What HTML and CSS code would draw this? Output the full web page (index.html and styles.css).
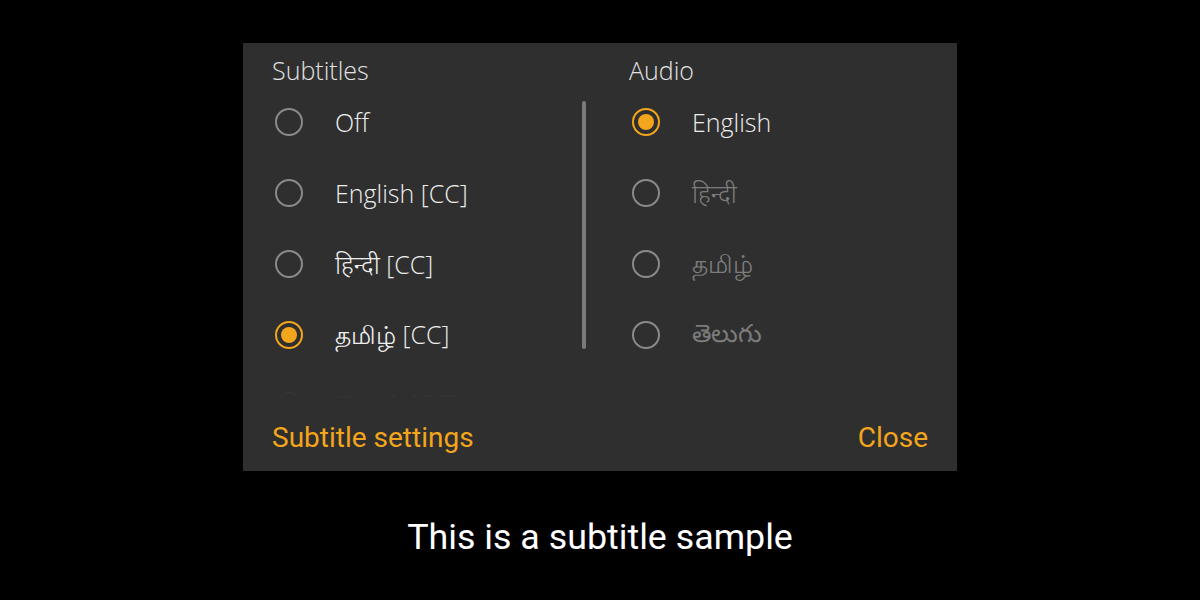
FILE: index.html
```html
<!DOCTYPE html>
<html lang="en">

<head>
    <meta charset="UTF-8">
    <meta name="viewport" content="width=device-width, initial-scale=1.0">
    <title>Subtitles and audio</title>
    <link rel="stylesheet" href="styles.css">
</head>

<body>
    <div class="screen">
        <div class="panel">
            <div class="columns">
                <div class="col col-left">
                    <h2>Subtitles</h2>
                    <div class="list-wrap">
                        <ul class="list">
                            <li><span class="radio"></span>Off</li>
                            <li><span class="radio"></span>English [CC]</li>
                            <li><span class="radio"></span>हिन्दी [CC]</li>
                            <li class="on"><span class="radio"></span>தமிழ் [CC]</li>
                            <li><span class="radio"></span>తెలుగు [CC]</li>
                        </ul>
                        <div class="fade"></div>
                        <div class="scrollbar"></div>
                    </div>
                </div>
                <div class="col col-right">
                    <h2>Audio</h2>
                    <ul class="list">
                        <li class="on"><span class="radio"></span>English</li>
                        <li class="off"><span class="radio"></span>हिन्दी</li>
                        <li class="off"><span class="radio"></span>தமிழ்</li>
                        <li class="off"><span class="radio"></span>తెలుగు</li>
                    </ul>
                </div>
            </div>
            <div class="actions">
                <a class="btn">Subtitle settings</a>
                <a class="btn">Close</a>
            </div>
        </div>
        <p class="sample">This is a subtitle sample</p>
    </div>
</body>

</html>
```

FILE: styles.css
```css
* {
    margin: 0;
    padding: 0;
    box-sizing: border-box;
    list-style: none;
}

html,
body {
    background: #000;
    height: 100%;
}

.screen {
    display: flex;
    flex-direction: column;
    align-items: center;
    padding-top: 43px;
}

.panel {
    width: 714px;
    height: 428px;
    background: #2f2f2f;
    display: flex;
    flex-direction: column;
    font-family: "Open Sans", "Noto Sans", "DejaVu Sans", sans-serif;
    font-weight: 300;
}

.columns {
    display: flex;
    padding: 11px 0 0 29px;
}

.col-left {
    width: 357px;
}

.col h2 {
    font-size: 25px;
    font-weight: 300;
    line-height: 32px;
    color: #e2e2e2;
}

.list-wrap {
    position: relative;
    height: 314px;
    overflow: hidden;
}

.list li {
    height: 71px;
    display: flex;
    align-items: center;
    font-size: 25px;
    color: #ededed;
}

.radio {
    width: 28px;
    height: 28px;
    border: 2.5px solid #8a8a8a;
    border-radius: 50%;
    margin: 0 32px 0 3px;
    flex-shrink: 0;
    position: relative;
}

.on .radio {
    border-color: #f3a51b;
}

.on .radio::after {
    content: '';
    position: absolute;
    top: 4px;
    left: 4px;
    right: 4px;
    bottom: 4px;
    border-radius: 50%;
    background: #f3a51b;
}

.off {
    color: #7c7c7c !important;
}

/* last row fades out under the footer */
.fade {
    position: absolute;
    left: 0;
    right: 0;
    bottom: 0;
    height: 30px;
    background: linear-gradient(rgba(47, 47, 47, 0.7), #2f2f2f 95%);
}

.scrollbar {
    position: absolute;
    top: 15px;
    right: 43px;
    width: 4px;
    height: 248px;
    border-radius: 2px;
    background: #7a7a7a;
}

.actions {
    margin-top: auto;
    height: 71px;
    display: flex;
    justify-content: space-between;
    align-items: center;
    padding: 4px 29px 0;
}

.btn {
    font-family: Roboto, "Liberation Sans", sans-serif;
    font-weight: 400;
    font-size: 28px;
    color: #f3a51b;
}

.sample {
    margin-top: 45px;
    font-family: Roboto, "Liberation Sans", sans-serif;
    font-size: 35.8px;
    color: #fff;
}
```
